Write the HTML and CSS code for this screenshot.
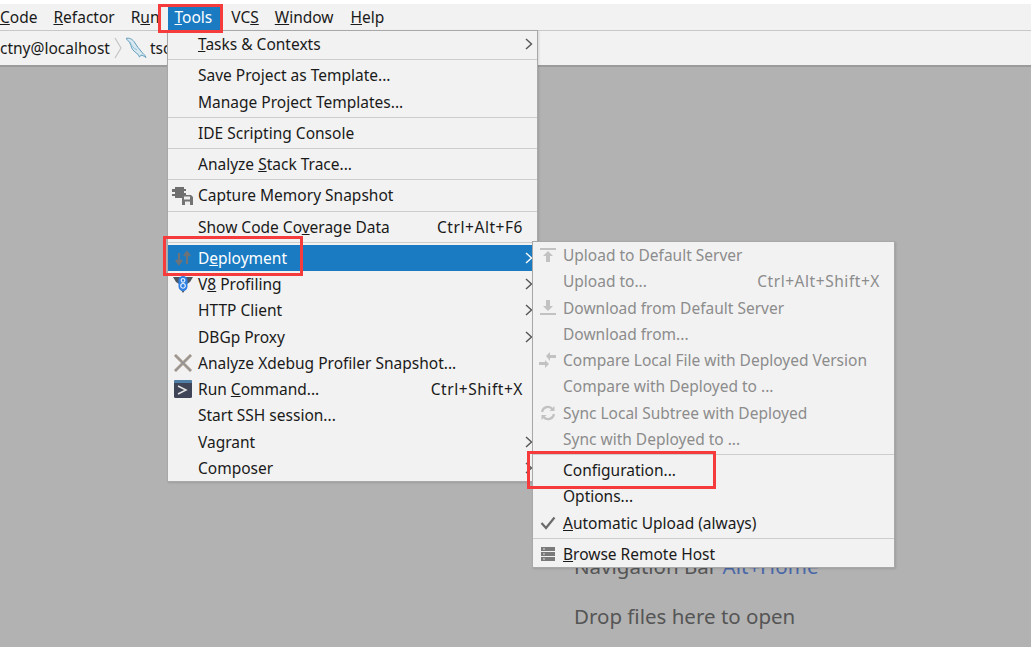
FILE: index.html
```html
<!DOCTYPE html>
<html lang="en">
<head>
<meta charset="utf-8">
<title>IDE Tools menu</title>
<link rel="stylesheet" href="styles.css">
</head>
<body>
<div class="app">
  <div class="top-strip"></div>
  <nav class="menubar">
    <span class="mb-item first"><u>C</u>ode</span>
    <span class="mb-item"><u>R</u>efactor</span>
    <span class="mb-item">R<u>u</u>n</span>
    <span class="mb-item active"><u>T</u>ools</span>
    <span class="mb-item">VC<u>S</u></span>
    <span class="mb-item"><u>W</u>indow</span>
    <span class="mb-item last"><u>H</u>elp</span>
  </nav>
  <div class="crumbs">
    <span>ctny@localhost</span>
    <svg class="crumb-sep" width="8" height="22" viewBox="0 0 8 22"><path d="M1 1l6 10-6 10" fill="none" stroke="#c4c4c4" stroke-width="1.2"/></svg>
    <svg class="dolphin" width="22" height="22" viewBox="0 0 22 22"><path d="M1 1.500c3-1 6 .5 8 3l4 6c1.500 2 3 3 4 5 1 .8 3 2.500 4 5-2-1.500-3.500-2-5-2.500 0 1-1 1.500-1.500 2-.5-1.500-1.500-2.500-3-4-3-2-5-4-5.500-7.500-1-2-2-4.500-3-5-1-.5-1.500-1-1.500-2z" fill="#d8e8f0" stroke="#5f9cbc" stroke-width="1"/><path d="M5 5c1 3 3 6 7 8" fill="none" stroke="#8fbdd4" stroke-width="1"/></svg>
    <span class="crumb-tail">tsc</span>
  </div>
  <main class="workspace">
    <p class="hint">Navigation Bar <span class="key">Alt+Home</span></p>
    <p class="hint">Drop files here to open</p>
  </main>

  <section class="menu tools-menu">
    <div class="row"><span class="ic"></span><span class="lb"><u>T</u>asks &amp; Contexts</span><svg class="arrow" width="8" height="12" viewBox="0 0 8 12"><path d="M1 1l5.500 5-5.500 5" /></svg></div>
    <hr class="sep">
    <div class="row"><span class="ic"></span><span class="lb">Save Project as Template...</span></div>
    <div class="row"><span class="ic"></span><span class="lb">Manage Project Templates...</span></div>
    <hr class="sep">
    <div class="row"><span class="ic"></span><span class="lb">IDE Scripting Console</span></div>
    <hr class="sep">
    <div class="row"><span class="ic"></span><span class="lb">Analyze <u>S</u>tack Trace...</span></div>
    <hr class="sep">
    <div class="row"><span class="ic"><svg width="22" height="20" viewBox="0 0 22 20"><path d="M0 4h3V2h9v2h2v2h-2v2h2v2h-4v3H3v-2H0V9h3V7H0V5.500h3V5.500H0z" fill="#6f6f6f"/><path d="M10 10h9l2 2v8H10z" fill="#737373"/><path d="M12 11.500h6v3h-6zM13 16.500h5V20h-5z" fill="#eee"/></svg></span><span class="lb">Capture Memory Snapshot</span></div>
    <hr class="sep">
    <div class="row"><span class="ic"></span><span class="lb">Show Code Co<u>v</u>erage Data</span><span class="sc">Ctrl+Alt+F6</span></div>
    <hr class="sep">
    <div class="row selected"><span class="ic"><svg width="18" height="16" viewBox="0 0 18 16"><path d="M5 3v10M2 10l3 4 3-4M13 14V4M10 6l3-4 3 4" fill="none" stroke="#6f7377" stroke-width="2.200"/></svg></span><span class="lb">D<u>e</u>ployment</span><svg class="arrow" width="8" height="12" viewBox="0 0 8 12"><path d="M1 1l5.500 5-5.500 5" /></svg></div>
    <div class="row"><span class="ic"><svg width="20" height="18" viewBox="0 0 20 18"><path d="M0 2h20l-3 5-3 2H6L3 7zM8 15h4l-2 3z" fill="#4b5560"/><rect x="5.500" y="1" width="9" height="15" rx="4.500" fill="#2f80e4"/><path d="M10 3.500a1.800 1.800 0 1 0 .01 0M10 8.500a2.300 2.300 0 1 0 .01 0" fill="none" stroke="#e4eefb" stroke-width="1.200"/></svg></span><span class="lb">V<u>8</u> Profiling</span><svg class="arrow" width="8" height="12" viewBox="0 0 8 12"><path d="M1 1l5.500 5-5.500 5" /></svg></div>
    <div class="row"><span class="ic"></span><span class="lb">HTTP Client</span><svg class="arrow" width="8" height="12" viewBox="0 0 8 12"><path d="M1 1l5.500 5-5.500 5" /></svg></div>
    <div class="row"><span class="ic"></span><span class="lb">DBGp Proxy</span><svg class="arrow" width="8" height="12" viewBox="0 0 8 12"><path d="M1 1l5.500 5-5.500 5" /></svg></div>
    <div class="row"><span class="ic"><svg width="20" height="18" viewBox="0 0 20 18"><path d="M2 1l16 16M18 1L2 17" fill="none" stroke="#b3a28f" stroke-width="3"/><path d="M2 1l16 16M18 1L2 17" fill="none" stroke="#8f9296" stroke-width="1.200"/></svg></span><span class="lb">Analyze Xdebug Profiler Snapshot...</span></div>
    <div class="row"><span class="ic"><svg width="18" height="18" viewBox="0 0 18 18"><rect width="18" height="18" rx="1.500" fill="#3f4456"/><path d="M0 1.500A1.500 1.500 0 0 1 1.500 0h15A1.500 1.500 0 0 1 18 1.500V3H0z" fill="#4f7ea6"/><path d="M4 6l8 4-8 4" fill="none" stroke="#e6e6e6" stroke-width="1.500"/></svg></span><span class="lb">Run <u>C</u>ommand...</span><span class="sc">Ctrl+Shift+X</span></div>
    <div class="row"><span class="ic"></span><span class="lb">Start SSH session...</span></div>
    <div class="row"><span class="ic"></span><span class="lb">Vagrant</span><svg class="arrow" width="8" height="12" viewBox="0 0 8 12"><path d="M1 1l5.500 5-5.500 5" /></svg></div>
    <div class="row"><span class="ic"></span><span class="lb">Composer</span><svg class="arrow" width="8" height="12" viewBox="0 0 8 12"><path d="M1 1l5.500 5-5.500 5" /></svg></div>
  </section>

  <section class="menu deploy-menu">
    <div class="row off"><span class="ic"><svg width="16" height="16" viewBox="0 0 16 16"><path d="M0 1h16v2H0z" fill="#c2c2c2"/><path d="M8 4l5 5h-3v6H6V9H3z" fill="#c2c2c2"/></svg></span><span class="lb">Upload to Default Server</span></div>
    <div class="row off"><span class="ic"></span><span class="lb">Upload to...</span><span class="sc">Ctrl+Alt+Shift+X</span></div>
    <div class="row off"><span class="ic"><svg width="16" height="16" viewBox="0 0 16 16"><path d="M0 13h16v2H0z" fill="#c2c2c2"/><path d="M8 11L3 6h3V0h4v6h3z" fill="#c2c2c2"/></svg></span><span class="lb">Download from Default Server</span></div>
    <div class="row off"><span class="ic"></span><span class="lb">Download from...</span></div>
    <div class="row off"><span class="ic"><svg width="18" height="16" viewBox="0 0 18 16"><path d="M7 4l4-4v3h6v3h-6v3zM10 12l-4-4v2H0v3h6v3z" fill="#c2c2c2"/></svg></span><span class="lb">Compare Local File with Deployed Version</span></div>
    <div class="row off"><span class="ic"></span><span class="lb">Compare with Deployed to ...</span></div>
    <div class="row off"><span class="ic"><svg width="16" height="16" viewBox="0 0 16 16"><path d="M2 7a6 6 0 0 1 10.500-3M14 9a6 6 0 0 1-10.500 3" fill="none" stroke="#c2c2c2" stroke-width="2.200"/><path d="M14.500 1v5h-5zM1.500 15v-5h5z" fill="#c2c2c2"/></svg></span><span class="lb">Sync Local Subtree with Deployed</span></div>
    <div class="row off"><span class="ic"></span><span class="lb">Sync with Deployed to ...</span></div>
    <hr class="sep">
    <div class="row"><span class="ic"></span><span class="lb">Configuration...</span></div>
    <div class="row"><span class="ic"></span><span class="lb">Options...</span></div>
    <div class="row"><span class="ic"><svg width="16" height="14" viewBox="0 0 16 14"><path d="M1.500 7l4.500 5 8.500-10.500" fill="none" stroke="#6b6b6b" stroke-width="2.200"/></svg></span><span class="lb"><u>A</u>utomatic Upload (always)</span></div>
    <hr class="sep">
    <div class="row"><span class="ic"><svg width="14" height="14" viewBox="0 0 14 14"><path d="M0 0h14v4H0zM0 5h14v4H0zM0 10h14v4H0z" fill="#7a7a7a"/><path d="M2 1.500h2v1H2zM2 6.500h2v1H2zM2 11.500h2v1H2z" fill="#ddd"/></svg></span><span class="lb"><u>B</u>rowse Remote Host</span></div>
  </section>

  <div class="mark mark-tools"></div>
  <div class="mark mark-deploy"></div>
  <div class="mark mark-config"></div>
</div>
</body>
</html>
```
FILE: styles.css
```css
* { box-sizing: border-box; }
html, body { margin: 0; height: 100%; }
body {
  font-family: "Noto Sans", "Open Sans", sans-serif;
  font-size: 15.5px;
  color: #1a1a1a;
  overflow: hidden;
}
.app {
  position: relative;
  width: 1031px;
  height: 647px;
  display: flex;
  flex-direction: column;
  background: #b2b2b2;
  overflow: hidden;
}
.top-strip { height: 4px; background: #fff; flex: none; }
.menubar {
  flex: none;
  height: 27px;
  display: flex;
  background: #f2f2f2;
  border-bottom: 1px solid #c8c8c8;
}
.mb-item {
  padding: 0 8px;
  line-height: 26px;
}
.mb-item.first { padding-left: 0; }
.mb-item.last { margin-left: 1px; }
.mb-item.active {
  background: #1a7bc2;
  color: #fff;
  padding: 0 10px 0 7px;
  margin-right: 1px;
}
.crumbs {
  flex: none;
  height: 36px;
  display: flex;
  align-items: center;
  background: #f2f2f2;
  border-bottom: 2px solid #9b9b9b;
}
.crumb-sep { margin-left: 4px; }
.dolphin { margin-left: 3px; }
.crumb-tail { margin-left: 3px; }
.workspace {
  flex: 1;
  padding: 485px 0 0 574px;
  color: #555;
  font-size: 20.5px;
}
.hint { margin: 0 0 21px; line-height: 29px; white-space: nowrap; }
.key { color: #4a68a8; }

.menu {
  position: absolute;
  background: #f2f2f2;
  border: 1px solid #a8a8a8;
  box-shadow: 1px 1px 2px rgba(0, 0, 0, .12);
}
.tools-menu { left: 167px; top: 30px; width: 371px; height: 452px; }
.deploy-menu { left: 532px; top: 241px; width: 363px; height: 327px; }
.row {
  display: flex;
  align-items: center;
  height: 26.25px;
  white-space: nowrap;
}
.ic {
  flex: none;
  width: 30px;
  display: flex;
  align-items: center;
  justify-content: center;
}
.lb { flex: 1; }
.sc { margin-right: 14px; letter-spacing: .55px; }
.arrow { margin-right: 4px; flex: none; }
.arrow path { fill: none; stroke: #555; stroke-width: 1.4; }
.sep {
  margin: 2px 0;
  border: 0;
  border-top: 1px solid #cdcdcd;
  height: 1px;
}
.selected { background: #1a7bc2; color: #fff; }
.selected .arrow path { stroke: #fff; }
.off { color: #8c8c8c; }
.mark {
  position: absolute;
  border: 3px solid #f53b3b;
}
.mark-tools { left: 158px; top: 4px; width: 65px; height: 29px; }
.mark-deploy { left: 163px; top: 236px; width: 140px; height: 40px; }
.mark-config { left: 527px; top: 451px; width: 189px; height: 38px; }
```
